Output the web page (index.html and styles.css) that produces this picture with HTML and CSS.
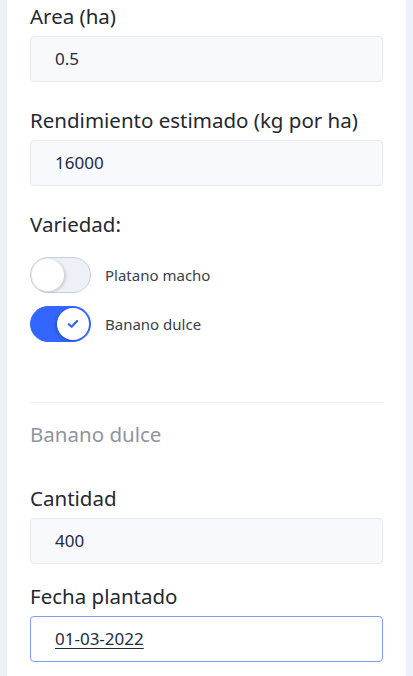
FILE: index.html
```html
<!DOCTYPE html>
<html lang="es">
<head>
<meta charset="utf-8" />
<meta name="viewport" content="width=device-width, initial-scale=1.0" />
<title>Cultivo</title>
<link rel="stylesheet" href="styles.css">
</head>
<body>
<div class="page">
	<div class="card">
		<div class="field">
			<div class="field_label">Area (ha)</div>
			<div class="field_input">0.5</div>
		</div>
		<div class="field">
			<div class="field_label">Rendimiento estimado (kg por ha)</div>
			<div class="field_input">16000</div>
		</div>
		<div class="field variety">
			<div class="field_label">Variedad:</div>
			<div class="toggle_list">
				<div class="toggle_row">
					<div class="toggle"><i class="knob"></i></div>
					<span class="toggle_text">Platano macho</span>
				</div>
				<div class="toggle_row">
					<div class="toggle on">
						<i class="knob">
							<svg width="12" height="10" viewBox="0 0 12 10"><path d="M1.8 5.2 L4.6 7.8 L10.2 2" fill="none" stroke="#3366ff" stroke-width="2.2" stroke-linecap="round" stroke-linejoin="round"/></svg>
						</i>
					</div>
					<span class="toggle_text">Banano dulce</span>
				</div>
			</div>
		</div>
		<div class="divider"></div>
		<div class="section_title">Banano dulce</div>
		<div class="field amount">
			<div class="field_label">Cantidad</div>
			<div class="field_input">400</div>
		</div>
		<div class="field">
			<div class="field_label">Fecha plantado</div>
			<div class="field_input focus"><u>01-03-2022</u></div>
		</div>
	</div>
</div>
</body>
</html>
```

FILE: styles.css
```css
html,body{margin:0;padding:0;}
body{background:#edf1f7;font-family:"Noto Sans","Open Sans",sans-serif;color:#222b45;}
.page{padding:0 7px;height:676px;overflow:hidden;}
.card{background:#fff;padding:3px 23px 40px;min-height:700px;box-sizing:border-box;}
.field{margin-bottom:25px;}
.field_label{font-size:20.5px;line-height:26px;color:#25282f;margin-bottom:7px;}
.field_input{height:46px;line-height:44px;box-sizing:border-box;border:1px solid #e4e9f2;border-radius:4px;background:#f7f9fc;padding:0 24px;font-size:17px;color:#222b45;}
.field_input.focus{background:#fff;border-color:#7f9cf5;}
.field_input u{text-decoration-thickness:1px;text-underline-offset:3px;}
.variety{margin-bottom:60px;}
.variety .field_label{margin-bottom:20px;}
.toggle_list{display:flex;flex-direction:column;gap:13px;}
.toggle_row{display:flex;align-items:center;gap:14px;}
.toggle{width:61px;height:36px;border-radius:18px;box-sizing:border-box;border:1px solid #c5cee0;background:#edf1f7;position:relative;}
.knob{position:absolute;top:1px;left:1px;width:32px;height:32px;border-radius:50%;background:#fff;box-shadow:2px 1px 3px rgba(0,0,0,.15);display:flex;align-items:center;justify-content:center;}
.toggle.on{background:#3366ff;border-color:#3366ff;}
.toggle.on .knob{left:auto;right:1px;box-shadow:-2px 1px 3px rgba(0,0,0,.2);}
.toggle_text{font-size:15px;color:#3a3f4c;}
.divider{height:1px;background:#f0f2f6;}
.section_title{font-size:20.5px;line-height:26px;color:#8f949c;margin:18px 0 38px;}
.amount{margin-bottom:19px;}
```
